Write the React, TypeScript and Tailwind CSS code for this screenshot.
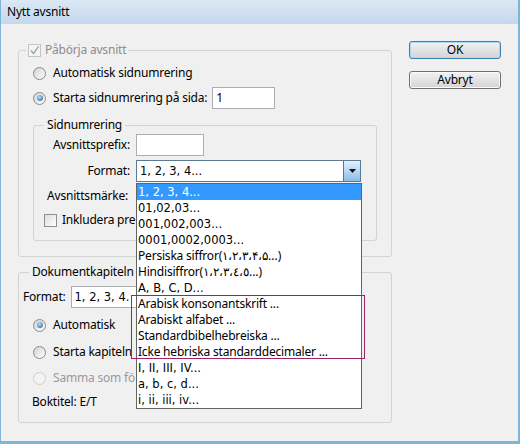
import React from 'react';

const ui = "font-['Noto_Sans',sans-serif] text-[12px] leading-[16px] tracking-[-0.2px]";
const tahoma = "font-['DejaVu_Sans',sans-serif] text-[11.5px] tracking-normal";

const formats: { label: string; tah: boolean }[] = [
  { label: '1, 2, 3, 4...', tah: true },
  { label: '01,02,03...', tah: true },
  { label: '001,002,003...', tah: true },
  { label: '0001,0002,0003...', tah: true },
  { label: 'Persiska siffror(١،٢،٣،۴،۵...)', tah: false },
  { label: 'Hindisiffror(١،٢،٣،٤،٥...)', tah: false },
  { label: 'A, B, C, D...', tah: true },
  { label: 'Arabisk konsonantskrift ...', tah: false },
  { label: 'Arabiskt alfabet ...', tah: false },
  { label: 'Standardbibelhebreiska ...', tah: false },
  { label: 'Icke hebriska standarddecimaler ...', tah: false },
  { label: 'I, II, III, IV...', tah: true },
  { label: 'a, b, c, d...', tah: true },
  { label: 'i, ii, iii, iv...', tah: true },
];

const Radio = ({ checked = false, disabled = false }: { checked?: boolean; disabled?: boolean }) => (
  <span
    className={`flex h-[13px] w-[13px] shrink-0 items-center justify-center rounded-full border ${
      disabled ? 'border-[#cdcdcd] bg-[#f3f3f3]' : 'border-[#8a8a8a] bg-gradient-to-br from-[#d2d2d2] to-[#ffffff]'
    }`}
  >
    {checked && <span className="h-[6px] w-[6px] rounded-full bg-[radial-gradient(circle_at_40%_35%,#b4e0f8,#1c5c98)]" />}
  </span>
);

const CheckBox = ({ checked = false, disabled = false }: { checked?: boolean; disabled?: boolean }) => (
  <span
    className={`flex h-[13px] w-[13px] shrink-0 items-center justify-center border ${
      disabled ? 'border-[#c4c4c4] bg-[#f4f4f4]' : 'border-[#8e8f8f] bg-gradient-to-br from-[#dcdcdc] to-[#ffffff]'
    }`}
  >
    {checked && (
      <svg width="11" height="11" viewBox="0 0 11 11">
        <path d="M2 5.5 L4.5 8.5 L9.5 1.5" fill="none" stroke={disabled ? '#a8a8a8' : '#1f3c6b'} strokeWidth="1.4" />
      </svg>
    )}
  </span>
);

const FormatList = () => (
  <div className="absolute left-[-1px] top-[22px] z-10 w-[226px] border border-[#646464] bg-white">
    {formats.map((f, i) => (
      <div
        key={f.label}
        className={`flex h-[16px] items-center whitespace-nowrap pl-[1px] ${f.tah ? tahoma : ''} ${
          i === 0 ? 'bg-[#3399ff] text-white' : 'text-black'
        }`}
      >
        {f.label}
      </div>
    ))}
    <div className="pointer-events-none absolute left-[-6px] right-[-4px] top-[111px] h-[64px] border border-[#a02266]" />
  </div>
);

const App: React.FC = () => (
  <div className={`${ui} h-[444px] w-[520px] overflow-hidden text-black`}>
    <div className="flex h-full flex-col border-b-[3px] border-l border-r-2 border-[#7db4d8] bg-[#f0f0f0]">
      <div className="flex h-[24px] shrink-0 items-center bg-gradient-to-b from-[#dce8f5] to-[#c4d8ed] pl-[6px]">Nytt avsnitt</div>

      <div className="flex flex-1 pl-[17px] pt-[18px]">
        <div className="flex w-[374px] flex-col">
          <fieldset className="rounded-[3px] border border-[#d3d3d3]">
            <legend className="ml-[7px] flex items-center gap-[4px] px-[2px] text-[#8d8d8d]">
              <CheckBox checked disabled />
              <span>Påbörja avsnitt</span>
            </legend>
            <div className="flex flex-col px-[14px] pb-[15px]">
              <div className="mt-[5px] flex h-[20px] items-center gap-[7px]">
                <Radio />
                <span>Automatisk sidnumrering</span>
              </div>
              <div className="mt-[4px] flex h-[22px] items-center">
                <Radio checked />
                <span className="ml-[7px]">Starta sidnumrering på sida:</span>
                <div className="ml-[5px] flex h-[22px] w-[63px] items-center border border-[#abadb3] bg-white pl-[3px]">1</div>
              </div>

              <fieldset className="mt-[8px] rounded-[3px] border border-[#d3d3d3]">
                <legend className="ml-[10px] px-[3px]">Sidnumrering</legend>
                <div className="flex flex-col pb-[13px] pr-[15px]">
                  <div className="mt-[1px] flex h-[22px] items-center gap-[6px]">
                    <span className="w-[96px] text-right">Avsnittsprefix:</span>
                    <div className="h-[22px] w-[68px] border border-[#abadb3] bg-white" />
                  </div>
                  <div className="mt-[4px] flex h-[22px] items-center gap-[6px]">
                    <span className="w-[96px] text-right">Format:</span>
                    <div className="relative flex h-[22px] w-[225px] items-center border border-[#5a7994] bg-white">
                      <span className={`flex-1 pl-[3px] ${tahoma}`}>1, 2, 3, 4...</span>
                      <span className="flex h-[20px] w-[17px] items-center justify-center border-l border-[#3c7fb1] bg-gradient-to-b from-[#e3f1fb] to-[#8cbde6]">
                        <svg width="7" height="4" viewBox="0 0 7 4">
                          <path d="M0 0 H7 L3.5 4 Z" fill="#111" />
                        </svg>
                      </span>
                      <FormatList />
                    </div>
                  </div>
                  <div className="mt-[3px] flex h-[22px] items-center gap-[6px]">
                    <span className="w-[94px] text-right">Avsnittsmärke:</span>
                  </div>
                  <div className="mt-[6px] flex h-[14px] items-center gap-[5px] pl-[10px]">
                    <CheckBox />
                    <span>Inkludera pre</span>
                  </div>
                </div>
              </fieldset>
            </div>
          </fieldset>

          <fieldset className="mt-[7px] rounded-[3px] border border-[#d3d3d3]">
            <legend className="ml-[10px] px-[3px]">Dokumentkapiteln</legend>
            <div className="flex flex-col pb-[10px]">
              <div className="mt-[6px] flex h-[22px] items-center pl-[4px]">
                <span>Format:</span>
                <div className={`ml-[5px] flex h-[22px] w-[230px] items-center border border-[#abadb3] bg-white pl-[3px] ${tahoma}`}>
                  1, 2, 3, 4.
                </div>
              </div>
              <div className="mt-[7px] flex h-[20px] items-center gap-[7px] pl-[14px]">
                <Radio checked />
                <span>Automatisk</span>
              </div>
              <div className="mt-[7px] flex h-[20px] items-center gap-[7px] pl-[14px]">
                <Radio />
                <span>Starta kapiteln</span>
              </div>
              <div className="mt-[6px] flex h-[20px] items-center gap-[7px] pl-[14px] text-[#9a9a9a]">
                <Radio disabled />
                <span>Samma som fö</span>
              </div>
              <div className="mt-[4px] flex h-[20px] items-center pl-[13px]">Boktitel: E/T</div>
            </div>
          </fieldset>
        </div>

        <div className="ml-[17px] mt-[-1px] flex flex-col gap-[12px]">
          <button
            type="button"
            className="h-[18px] w-[92px] rounded-[3px] border border-[#3c7fb1] bg-gradient-to-b from-[#f2f2f2] to-[#d4d4d4] leading-[14px] shadow-[inset_0_0_0_1px_#a7dcf3]"
          >
            OK
          </button>
          <button
            type="button"
            className="h-[18px] w-[92px] rounded-[3px] border border-[#707070] bg-gradient-to-b from-[#f2f2f2] to-[#d4d4d4] leading-[14px] shadow-[inset_0_0_0_1px_#fbfbfb]"
          >
            Avbryt
          </button>
        </div>
      </div>
    </div>
  </div>
);

export default App;
